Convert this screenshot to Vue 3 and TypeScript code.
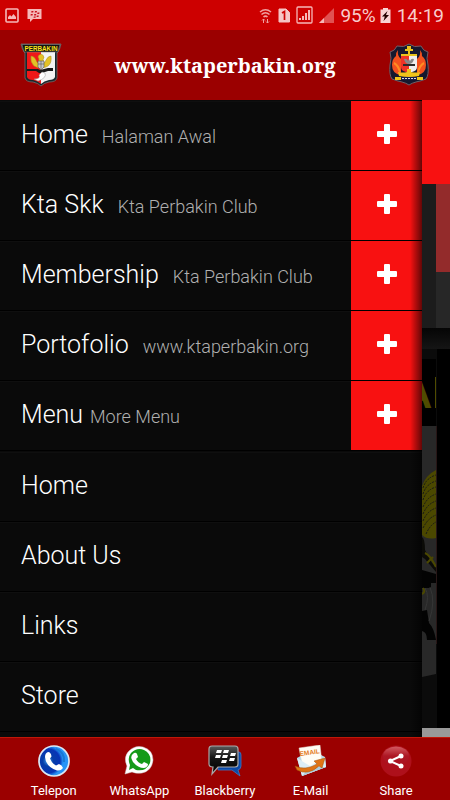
<script setup lang="ts">
import { ref } from 'vue'

interface MenuItem {
  label: string
  note: string
  tight?: boolean
}

const groups: MenuItem[] = [
  { label: 'Home', note: 'Halaman Awal' },
  { label: 'Kta Skk', note: 'Kta Perbakin Club' },
  { label: 'Membership', note: 'Kta Perbakin Club' },
  { label: 'Portofolio', note: 'www.ktaperbakin.org' },
  { label: 'Menu', note: 'More Menu', tight: true },
]
const links: string[] = ['Home', 'About Us', 'Links', 'Store']
const selected = ref<string>('')
</script>

<template>
  <div class="app">
    <div class="status">
      <div class="status-left">
        <svg width="14" height="15" viewBox="0 0 14 15"><rect x="1" y="1" width="12" height="13" rx="1" fill="none" stroke="#f5b8b8" stroke-width="1.6" /><path d="M3 11V9l2-2 1.500 1.500L8.500 6 11 9v2z" fill="#f5b8b8" /></svg>
        <svg width="15" height="14" viewBox="0 0 15 14"><path d="M.5 1h14v10H6l-3 3v-3H.5z" fill="#f5b8b8" /><path d="M4.500 3h2l-.3 1.500h-2zM8 3h2l-.3 1.500H7.700zM3.800 6h2l-.3 1.500h-2zM7.300 6h2L9 7.500H7zM10.500 4.500h2L12.200 6h-2zM9.800 7.500h2L11.500 9h-2zM6.800 8.500h2l-.3 1.300h-2z" fill="#c8101c" /></svg>
      </div>
      <div class="status-right">
        <svg width="13" height="17" viewBox="0 0 13 17" fill="none" stroke="#f0a0a0" stroke-width="1.500"><path d="M1 5Q6.500.5 12 5M2.500 7.500q4-3.500 8 0M4.500 10q2-1.800 4 0" /><path d="M4.500 16v-4M3 13.500 4.500 12 6 13.500M8.500 12v4M7 14.500 8.500 16 10 14.500" stroke-width="1" /></svg>
        <svg width="12" height="15" viewBox="0 0 12 15"><path d="M1 1h7l3.500 3.500V14H1z" fill="#f6c4c4" stroke="#f6c4c4" stroke-linejoin="round" /><path d="M4 5l2.500-1.500V12" fill="none" stroke="#c00" stroke-width="1.700" /></svg>
        <svg width="17" height="18" viewBox="0 0 17 18"><rect x="1" y="1" width="15" height="16" rx="1" fill="none" stroke="#f6b8b8" stroke-width="1.300" /><path d="M3 14h2v-2H3zM6 14h2v-4H6zM9 14h2V7H9zM12 14h2V4h-2z" fill="#f6b8b8" /></svg>
        <svg width="15" height="15" viewBox="0 0 15 15"><path d="M15 0v15H0z" fill="#e15252" /><path d="M5 10v5H0z" fill="#f6b8b8" /></svg>
        <span class="battery">95%</span>
        <svg width="11" height="15" viewBox="0 0 11 15"><path d="M3 0h5v1.500h2.500V15H.5V1.500H3z" fill="#f9d4d4" /><path d="M7.500 3 2 8.500h2.800L3.500 13 9 7H6z" fill="#200" /></svg>
        <span class="clock">14:19</span>
      </div>
    </div>

    <header class="header">
      <svg class="crest" width="42" height="44" viewBox="0 0 42 44">
        <defs><linearGradient id="rw"><stop offset=".5" stop-color="#f01818" /><stop offset=".5" stop-color="#f4f4f4" /></linearGradient></defs>
        <path d="M1 1h40q-1 6-4 9v25q-1 4-8 4-5 1-8 4-3-3-8-4-7 0-8-4V10Q2 7 1 1z" fill="#18282c" stroke="#777" stroke-width=".7" />
        <path d="M7 9h28v25q-1 3-6 3-5 1-8 4-3-3-8-4-5 0-6-3z" fill="url(#rw)" />
        <path d="M2 1.500h38L38 9H4z" fill="#111" stroke="#888" stroke-width=".6" />
        <text x="21" y="7.600" text-anchor="middle" font-family="Liberation Sans" font-size="6.300" font-weight="700" fill="#fae51c">PERBAKIN</text>
        <path d="M11 13q3 0 5 4 1 3 2 3l1-4-1-2q0-2 3-3 3 1 3 4l-1 1 1 4q1 0 2-3 2-4 5-4 1 7-3 10-3 2-7 2t-7-2q-4-4-3-10z" fill="#e3c226" stroke="#a58a1c" stroke-width=".5" />
        <path d="M18 18h6v6l-3 3-3-3z" fill="#c9c9c9" stroke="#555" stroke-width=".6" /><path d="M18 21h6M21 18v8" stroke="#555" stroke-width=".6" />
        <path d="M7 26h11l2 1 8-2h5v3h-5l-3 1-3 1H19l-3-2H7z" fill="#1a1a1a" />
        <path d="M14 36q7 0 5-4l3-3 3 1q2 5-7 8z" fill="#fff" stroke="#999" stroke-width=".5" />
      </svg>
      <h1 class="title">www.ktaperbakin.org</h1>
      <svg class="crest" width="42" height="44" viewBox="0 0 42 44">
        <path d="M21 1q5 4 12 2 2 5 7 6-2 6 0 13 1 10-2 14-5 2-10 3-4 1-7 3-3-2-7-3-5-1-10-3-3-4-2-14 2-7 0-13 5-1 7-6 7 2 12-2z" fill="#15182e" stroke="#6b6068" />
        <path d="M10 7q-1 6 3 9v16q-9-1-9-10 0-6 4-9 0-4 2-6zM32 7q1 6-3 9v16q9-1 9-10 0-6-4-9 0-4-2-6z" fill="#f4511e" />
        <path d="M6 20q4 2 6 9M36 20q-4 2-6 9" stroke="#ff8d22" stroke-width="2" fill="none" />
        <path d="M13 12h8v17h-3q-5-1-5-5z" fill="#ef3326" />
        <path d="M21 12h8v12q0 4-5 5h-3z" fill="#eee" />
        <path d="M13 11h16v2H13zM19 3h4v3h2v2h-3v3h-2V8h-3V6h2z" fill="#e8c31c" />
        <path d="M16 16q3-1 4 2l1-2 1 2q1-3 4-2-1 5-5 5-4 0-5-5z" fill="#888" />
        <path d="M15 21h12v2H15z" fill="#292929" />
        <path d="M19 26h4v3q4 1 9 0l-1 4q-5 1-10 1t-10-1l-1-4q5 1 9 0zM7 34h28v3H7z" fill="#f0c51b" />
        <path d="M13 34h16v3H13z" fill="#18204a" /><path d="M14 35.500h14" stroke="#ddd" stroke-dasharray="2 1" />
      </svg>
    </header>

    <main class="main">
      <nav class="menu" aria-label="Menu">
        <ul class="group">
          <li v-for="item in groups" :key="item.label" class="row">
            <a href="#" class="link" :class="{ tight: item.tight }" @click.prevent="selected = item.label">
              <span>{{ item.label }}</span>
              <small class="note">{{ item.note }}</small>
            </a>
            <button type="button" class="expand" :aria-label="'Expand ' + item.label">
              <svg width="20" height="20" viewBox="0 0 20 20"><path d="M8 0h4q1 0 1 1v6h6q1 0 1 1v4q0 1-1 1h-6v6q0 1-1 1H8q-1 0-1-1v-6H1q-1 0-1-1V8q0-1 1-1h6V1q0-1 1-1z" fill="#fff" /></svg>
            </button>
          </li>
        </ul>
        <ul class="group">
          <li v-for="label in links" :key="label" class="row">
            <a href="#" class="link" @click.prevent="selected = label">{{ label }}</a>
          </li>
        </ul>
      </nav>

      <div class="page" aria-hidden="true">
        <div class="page-top"></div>
        <div class="page-cards"><div class="card"></div></div>
        <svg class="page-art" width="28" height="400" viewBox="0 0 28 400">
          <defs><linearGradient id="fade" x2="0" y2="1"><stop stop-color="#050505" /><stop offset="1" stop-color="#151515" /></linearGradient></defs>
          <path d="M0 0h28v400H0z" fill="#0b0b0b" />
          <path d="M0 0h28v21H0z" fill="url(#fade)" />
          <path d="M0 31h14v67H0zM15 21h13v379H15z" fill="#000" />
          <text x="-20" y="80" font-family="Liberation Sans" font-size="42" font-weight="700" fill="#504c00">A</text>
          <path d="M13 49h1v31h-1z" fill="#504c00" />
          <path d="M0 98h14v248l-14 3z" fill="#282828" />
          <path d="M14 142Q4 147 0 158v49q5 5 14 3z" fill="#4b4800" />
          <path d="M1 160q3-10 13-13M1 166q3-10 13-13M1 172q3-10 13-13M1 179q4-10 13-13M1 186q4-10 13-13M1 193q4-10 13-13M1 200q5-10 13-13M4 206q4-9 10-12" fill="none" stroke="#191a17" stroke-dasharray="2 1" />
          <path d="M0 209q3 2 3 13l7 13 4 3v6L3 231l-3-2z" fill="#0b0b07" />
          <path d="M3 225q5 2 11 14M5 235l6-6" fill="none" stroke="#4b4800" stroke-width="2" />
          <path d="M0 242l14 4v9H9v5H0zM0 283l5-1 2 13q5 5 7 17H5q0-8-5-9z" fill="#030303" />
          <path d="M3 260q5 8 0 22M8 259q6 15-1 34" fill="none" stroke="#363636" />
          <path d="M0 266q4-2 1-6" stroke="#4b4800" stroke-width="2" fill="none" />
          <path d="M14.500 98v218" stroke="#281717" />
        </svg>
        <div class="page-bottom"></div>
      </div>
    </main>

    <footer class="footer">
      <a class="action" href="#">
        <svg width="34" height="32" viewBox="0 0 34 32"><defs><radialGradient id="blue" cx=".3" cy=".5"><stop stop-color="#42a4f3" /><stop offset=".35" stop-color="#063da8" /><stop offset=".8" stop-color="#0733b6" /><stop offset="1" stop-color="#2793f6" /></radialGradient></defs><circle cx="17" cy="16" r="15" fill="url(#blue)" stroke="#dce8f4" stroke-width="1.700" /><path d="M11 7q3 0 3.500 4.500L13 13.500q2 5 6 7l3-1.500q3 1 4 4-2 3-6 2.500Q9 22 8 12q0-4 3-5z" fill="#fff" /><path d="M19 4q9 3 8 13" fill="none" stroke="#1977d5" stroke-width="2" /></svg>
        <span>Telepon</span>
      </a>
      <a class="action" href="#">
        <svg width="34" height="32" viewBox="0 0 34 32"><path d="M3 29l2-8Q1 12 7 6q6-6 14-4 10 3 10 13-1 11-11 13-6 1-10-1z" fill="#fff" stroke="#ccc" stroke-width=".5" /><path d="M7 25l1-5Q5 13 9 8q6-6 13-3 8 4 6 13-4 9-14 7l-3-2z" fill="#159a18" /><path d="M12 8q2-1 3 1l1 3-2 2q2 4 6 5l2-2 4 2q0 3-4 4-6 0-11-6-4-6 1-9z" fill="#fff" /></svg>
        <span>WhatsApp</span>
      </a>
      <a class="action" href="#">
        <svg width="34" height="32" viewBox="0 0 34 32"><defs><linearGradient id="bb" x2="0" y2="1"><stop stop-color="#5b5b5b" /><stop offset=".4" stop-color="#171717" /><stop offset="1" stop-color="#000" /></linearGradient></defs><path d="M10 7h21q2 0 2 3v11q0 3-3 4l2 6-8-6H10z" fill="#0b4aa8" stroke="#3b79c8" stroke-width=".8" /><path d="M4 1h23q3 0 3 3v15q0 3-3 3H10l-6 7 1-7q-4 0-4-3V4q0-3 3-3z" fill="url(#bb)" stroke="#a8a8a8" stroke-width="1.200" /><path d="M9 5h5l-1 3H8zM16 5h5l-1 3h-5zM8 10h5l-1 3H7zM15 10h5l-1 3h-5zM23 8h5l-1 3h-5zM22 13h5l-1 3h-5zM14 15h5l-1 3h-5z" fill="#fff" /></svg>
        <span>Blackberry</span>
      </a>
      <a class="action" href="#">
        <svg width="34" height="32" viewBox="0 0 34 32"><path d="M3 13 17 5l14 7 1 10-24 9z" fill="#b2d7ea" /><path d="M5 3 26 0l2 18-19 6z" fill="#fffdf5" stroke="#dedbd0" stroke-width=".5" /><text x="6" y="11" transform="rotate(-8 6 11)" font-family="Liberation Sans" font-size="6.500" font-weight="700" fill="#e47b22">EMAIL</text><path d="M3 13l13 8 15-9 1 10-24 9z" fill="#dceef6" /><path d="M8 31l8-9 16 0z" fill="#aecddd" /><path d="M1 21q10 5 22-2l-3-3 11-3-3 10-3-2q-11 10-22 4z" fill="#df7415" stroke="#9e520d" stroke-width=".5" /></svg>
        <span>E-Mail</span>
      </a>
      <button type="button" class="action">
        <svg width="34" height="32" viewBox="0 0 34 32"><defs><linearGradient id="share" x2="0" y2="1"><stop stop-color="#d35b62" /><stop offset=".5" stop-color="#ad1724" /><stop offset="1" stop-color="#a91120" /></linearGradient></defs><circle cx="17" cy="16" r="15.500" fill="#ae101b" /><ellipse cx="17" cy="11" rx="13" ry="9.500" fill="url(#share)" /><path d="M22 11l-11 5 11 5" fill="none" stroke="#fff" stroke-width="2" /><circle cx="22" cy="11" r="2.500" fill="#fff" /><circle cx="11.500" cy="16" r="2.500" fill="#fff" /><circle cx="22" cy="21" r="2.500" fill="#fff" /></svg>
        <span>Share</span>
      </button>
    </footer>
  </div>
</template>

<style>
body { margin: 0; background: #0a0a0a; }
</style>

<style scoped>
.app {
  box-sizing: border-box;
  min-height: 100vh;
  display: flex;
  flex-direction: column;
  font-family: Roboto, "Liberation Sans", sans-serif;
}
svg { display: block; flex: none; }
.status {
  height: 30px;
  padding: 0 6px 0 5px;
  display: flex;
  align-items: center;
  justify-content: space-between;
  background: #cd0000;
  color: #f8cccc;
  font-size: 19px;
}
.status-left { display: flex; align-items: center; gap: 8px; }
.status-right { display: flex; align-items: center; gap: 6px; }
.battery { margin-right: -2px; }
.header {
  height: 70px;
  padding: 0 20px;
  box-sizing: border-box;
  display: flex;
  align-items: center;
  justify-content: space-between;
  background: #9b0000;
}
.title {
  margin: 0;
  padding-top: 2px;
  color: #fff;
  font: 700 20px/32px "Noto Serif", "Liberation Serif", serif;
}
.main { flex: 1; display: flex; background: #0a0a0a; }
.menu { flex: 1; min-width: 0; position: relative; }
.menu::after {
  content: "";
  position: absolute;
  inset: 0 0 0 auto;
  width: 12px;
  background: linear-gradient(to right, transparent, rgba(0, 0, 0, 0.6));
  pointer-events: none;
}
.group { list-style: none; margin: 0; padding: 1px 0 0; }
.row {
  box-sizing: border-box;
  height: 70px;
  display: flex;
  border-bottom: 1px solid #000;
  box-shadow: inset 0 1px #0f0f0f;
}
.link {
  flex: 1;
  min-width: 0;
  padding: 18px 0 0 21px;
  display: flex;
  align-items: baseline;
  gap: 14px;
  color: #fff;
  font-size: 25px;
  line-height: 32px;
  font-weight: 300;
  text-decoration: none;
  white-space: nowrap;
}
.tight { gap: 7px; }
.note { color: #b0b0b0; font-size: 18px; }
.expand {
  width: 71px;
  padding: 0 0 4px;
  border: 0;
  display: flex;
  align-items: center;
  justify-content: center;
  background: #f81111;
}
.page { width: 28px; display: flex; flex-direction: column; background: #000; }
.page-top { height: 84px; background: #f81111; }
.page-cards {
  height: 144px;
  display: flex;
  justify-content: flex-end;
  background: #1c1c1c;
}
.card {
  width: 14px;
  background: linear-gradient(#932b2b 88px, #272727 88px);
}
.page-bottom { margin-top: auto; height: 9px; background: #999; }
.footer {
  height: 63px;
  box-sizing: border-box;
  padding: 7px 11px 0;
  border-top: 1px solid #c01808;
  display: grid;
  grid-template-columns: repeat(5, 1fr);
  background: #9b0000;
}
.action {
  display: flex;
  flex-direction: column;
  align-items: center;
  gap: 6px;
  padding: 0;
  border: 0;
  background: none;
  color: #fff;
  font: 400 13px/16px Roboto, "Liberation Sans", sans-serif;
  text-decoration: none;
}
</style>
